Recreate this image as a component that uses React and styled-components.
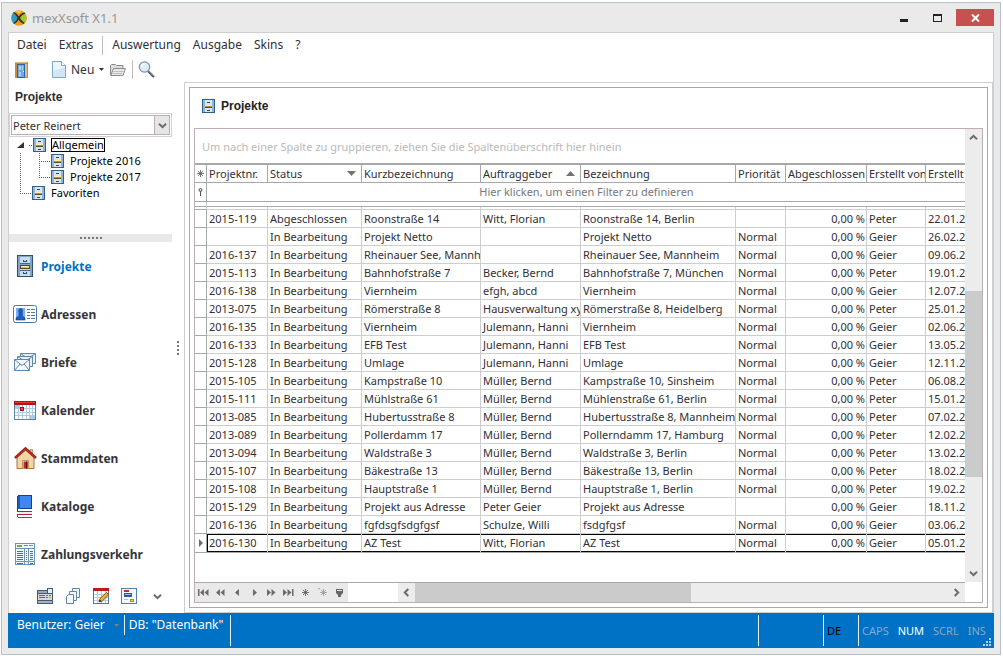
import React from "react";
import styled, { createGlobalStyle, css } from "styled-components";

const Global = createGlobalStyle`
  *, *::before, *::after { box-sizing: border-box; }
  html, body { margin: 0; background: #fff; }
  body, button, select, input {
    font-family: "Noto Sans", "Open Sans", sans-serif;
    font-size: 11px;
    color: #2f2f35;
  }
  button { background: none; border: 0; padding: 0; margin: 0; cursor: default; }
  ul { list-style: none; margin: 0; padding: 0; }
  svg { display: block; flex: none; }
`;

/* ---------- window frame ---------- */
const Page = styled.div`
  min-height: 100vh;
  padding: 2px 2px 1px 1px;
  display: flex;
`;
const Frame = styled.div`
  flex: 1;
  min-width: 0;
  display: flex;
  flex-direction: column;
  background: #eaeaea;
  border: 1px solid #b7bfc8;
  padding: 0 6px 6px;
`;
const TitleBar = styled.header`
  height: 29px;
  display: flex;
  align-items: center;
  gap: 5px;
  padding-left: 3px;
`;
const Title = styled.h1`
  flex: 1;
  margin: 0;
  font-size: 13px;
  font-weight: 400;
  color: #969696;
`;
const WindowButton = styled.button`
  width: 28px;
  height: 17px;
  display: flex;
  align-items: center;
  justify-content: center;
`;
const CloseButton = styled(WindowButton)`
  width: 38px;
  background: #c75050;
`;
const Content = styled.div`
  flex: 1;
  display: flex;
  flex-direction: column;
  min-width: 0;
  background: #fff;
  border: 1px solid #cfcfcf;
  border-bottom: 0;
`;

/* ---------- menu and toolbar ---------- */
const MenuBar = styled.nav`
  height: 24px;
  display: flex;
  align-items: center;
  padding-left: 8px;
  gap: 12px;
`;
const MenuButton = styled.button`
  font-size: 12px;
  line-height: 20px;
`;
const Rule = styled.span`
  width: 1px;
  height: 19px;
  background: #c3b8ba;
`;
const MenuRule = styled(Rule)`
  margin: 0 -3px;
`;
const ToolBar = styled.div`
  height: 25px;
  display: flex;
  align-items: center;
  padding-left: 6px;
`;
const ToolButton = styled.button`
  display: flex;
  align-items: center;
  gap: 5px;
  font-size: 12px;
  margin-right: ${(p) => p.$after || 6}px;
`;

/* ---------- left side ---------- */
const Body = styled.div`
  flex: 1;
  display: flex;
  min-height: 0;
`;
const Side = styled.aside`
  width: 163px;
  flex: none;
  display: flex;
  flex-direction: column;
`;
const SideTitle = styled.h2`
  margin: 0;
  height: 31px;
  padding-left: 6px;
  line-height: 30px;
  font: bold 12px/30px "Liberation Sans", sans-serif;
`;
const Combo = styled.label`
  display: grid;
  grid-template-columns: 1fr 16px;
  height: 24px;
  padding: 1px;
  border: 1px solid #d3d3d3;
`;
const ComboSelect = styled.select`
  appearance: none;
  grid-area: 1 / 1 / 2 / 3;
  border: 1px solid #bfaeb1;
  border-radius: 0;
  background: #fff;
  padding: 0 0 0 1px;
  margin: 0;
`;
const ComboArrow = styled.span`
  grid-area: 1 / 2 / 2 / 3;
  display: flex;
  align-items: center;
  justify-content: center;
  background: #e6e6e6;
  border: 1px solid #bfaeb1;
  pointer-events: none;
`;
const Tree = styled.ul`
  height: 97px;
  color: #000;
`;
const TreeBranch = styled.li`
  position: relative;
  ${(p) =>
    p.$line &&
    css`
      &::before {
        content: "";
        position: absolute;
        left: ${p.$x}px;
        top: ${p.$top}px;
        height: ${p.$line}px;
        border-left: 1px dotted #666;
      }
    `}
`;
const TreeRow = styled.div`
  height: 16px;
  display: flex;
  align-items: center;
  gap: 5px;
  padding-left: ${(p) => p.$indent}px;
`;
const Dots = styled.span`
  width: ${(p) => p.$w}px;
  border-top: 1px dotted #666;
  margin-right: -4px;
`;
const TreeLabel = styled.button`
  color: #000;
  height: 14px;
  line-height: 12px;
  border: 1px solid ${(p) => (p.$focus ? "#000" : "transparent")};
  white-space: nowrap;
`;
const HSplitter = styled.div`
  height: 8px;
  background: #e8e8e8;
  display: flex;
  align-items: center;
  justify-content: center;
  gap: 2px;
`;
const Dot = styled.i`
  width: 2px;
  height: 2px;
  background: #777;
`;
const VSplitter = styled.div`
  width: 12px;
  flex: none;
  display: flex;
  flex-direction: column;
  align-items: center;
  justify-content: center;
  gap: 2px;
`;
const NavList = styled.ul`
  flex: 1;
`;
const NavButton = styled.button`
  width: 100%;
  height: 48px;
  display: grid;
  grid-template-columns: 24px 1fr;
  justify-items: center;
  align-items: center;
  column-gap: 4px;
  padding-left: 4px;
  font-weight: bold;
  font-size: 12px;
  color: ${(p) => (p.$active ? "#0072c6" : "#35353a")};
  span { justify-self: start; }
`;
const IconRow = styled.div`
  height: 34px;
  padding-left: 28px;
  display: flex;
  align-items: center;
  gap: 12px;
`;
const IconButton = styled.button`
  width: 16px;
  height: 16px;
  display: flex;
  align-items: center;
  justify-content: center;
`;

/* ---------- main panel ---------- */
const Main = styled.main`
  flex: 1;
  min-width: 0;
  display: flex;
  border: 1px solid #cfcfcf;
  border-width: 1px 1px 1px 1px;
  padding: 4px;
`;
const Panel = styled.section`
  flex: 1;
  min-width: 0;
  display: flex;
  flex-direction: column;
  border: 1px solid #a8a8a8;
  padding: 0 4px 4px;
`;
const PanelTitle = styled.h2`
  margin: 0;
  height: 40px;
  padding: 0 0 4px 8px;
  display: flex;
  align-items: center;
  gap: 6px;
  font: bold 12px "Liberation Sans", sans-serif;
  color: #222;
`;
const Grid = styled.div`
  flex: 1;
  min-width: 0;
  display: grid;
  grid-template-columns: minmax(0, 1fr) 17px;
  grid-template-rows: 1fr 20px;
  border: 1px solid #bfaeb1;
`;
const GridView = styled.div`
  min-width: 0;
  overflow: hidden;
`;
const GroupBox = styled.div`
  height: 36px;
  padding-left: 7px;
  line-height: 36px;
  color: #b9b9b9;
  border-bottom: 2px solid #a8a8a8;
  white-space: nowrap;
`;
const Table = styled.table`
  table-layout: fixed;
  width: 100%;
  border-spacing: 0;
  td, th {
    height: 18px;
    padding: 0 1px 0 2px;
    line-height: 16px;
    text-align: left;
    font-weight: 400;
    white-space: nowrap;
    overflow: hidden;
    border-right: 1px solid #cdcdcd;
    border-bottom: 1px solid #cdcdcd;
  }
  td:last-child, th:last-child { border-right: 0; }
  th { border-color: #a8a8a8; }
`;
const Col = styled.col`
  width: ${(p) => (p.$w ? p.$w + "px" : "auto")};
`;
const HeadCell = styled.div`
  display: flex;
  align-items: center;
  justify-content: space-between;
  padding-right: ${(p) => (p.$sorted ? 4 : 0)}px;
`;
const Mark = styled.td`
  && {
    padding: 0;
    border-color: #a8a8a8;
    svg { margin: 0 auto; }
  }
`;
const FilterCell = styled.td`
  && {
    height: 19px;
    border-bottom-color: #a8a8a8;
    text-align: center;
  }
`;
const FilterButton = styled.button`
  color: #77777c;
`;
const GapCell = styled.td`
  && {
    height: ${(p) => p.$h}px;
    padding: 0;
    line-height: 0;
    ${(p) => p.$dark && "border-bottom-color: #a8a8a8;"}
    ${(p) => p.$plain && "border-right: 0;"}
  }
`;
const Row = styled.tr`
  ${(p) =>
    p.$current &&
    css`
      && td {
        height: 19px;
        border-bottom-color: #a8a8a8;
      }
      && td:not(:first-child) {
        box-shadow: inset 0 1px #000, inset 0 -1px #000;
      }
      && td:nth-child(2) {
        box-shadow: inset 0 1px #000, inset 0 -1px #000, inset 1px 0 #000;
      }
    `}
`;
const NumCell = styled.td`
  && { text-align: right; }
`;

/* ---------- scroll bars ---------- */
const VScroll = styled.div`
  display: flex;
  flex-direction: column;
  background: #ececec;
`;
const HScroll = styled.div`
  flex: 1;
  display: flex;
  background: #ececec;
`;
const ArrowButton = styled.button`
  width: 17px;
  height: 17px;
  display: flex;
  align-items: center;
  justify-content: center;
  align-self: center;
`;
const Span = styled.div`
  flex: ${(p) => p.$n} 1 0;
  ${(p) => p.$thumb && "background: #cbcbcb;"}
`;
const GridFoot = styled.div`
  display: flex;
  border-top: 1px solid #a8a8a8;
`;
const Navigator = styled.div`
  display: flex;
  align-items: center;
  background: #e9e9e9;
  margin-right: 50px;
`;
const NavigatorButton = styled.button`
  width: 17px;
  display: flex;
  justify-content: center;
`;
const Corner = styled.div`
  border-top: 0;
`;

/* ---------- status bar ---------- */
const StatusBar = styled.footer`
  height: 35px;
  display: flex;
  align-items: flex-start;
  background: #0072c6;
  color: #fff;
  margin: 0 -1px;
  padding: 2px 3px 2px 9px;
`;
const StatusCell = styled.div`
  height: ${(p) => (p.$short ? 20 : 31)}px;
  display: flex;
  align-items: center;
  font-size: 12px;
  border-right: 1px solid #e8f1f9;
  padding: ${(p) => p.$pad || "0 4px"};
`;
const StatusLabel = styled.span`
  line-height: 20px;
  align-self: flex-start;
  white-space: nowrap;
`;
const StatusSlot = styled.div`
  height: 31px;
  width: ${(p) => p.$w}px;
  border-left: 1px solid #e8f1f9;
  padding: 0 3px;
  display: flex;
  align-items: center;
  gap: 9px;
  color: #000;
`;
const Key = styled.span`
  color: ${(p) => (p.$on ? "#fff" : "#8fa9bf")};
`;
const Grow = styled.div`
  flex: 1;
`;
const Grip = styled.span`
  align-self: flex-end;
  margin-left: auto;
`;

/* ---------- icons ---------- */
const crisp = { shapeRendering: "crispEdges" };

const Logo = () => (
  <svg width="16" height="16" viewBox="0 0 16 16">
    <circle cx="8" cy="8" r="7.8" fill="#f39a1d" />
    <path d="M2.2 2.8C5 4.5 6 6 6.4 8 6 10 5 11.6 2.6 13.6A8 8 0 0 1 2.2 2.8Z" fill="#2f9bc9" />
    <path d="M13.8 2.8C11 4.5 9.6 6 9 8c.6 2 1.800 3.600 4.400 5.600A8 8 0 0 0 13.800 2.800Z" fill="#a9c62c" />
    <path d="M3 1.900C6 3.500 7 5 7.700 6.600 8.800 4.500 10.500 3 13.500 2.400L14.300 3.500C11.500 4.800 9.700 6.300 9 8.100c.9 1.900 2.300 3.300 4.700 4.700l-1 1.200C10 12.800 8.500 11.300 7.700 9.600 6.900 11.500 5.500 12.900 3.200 14l-1-1.100C4.700 11.500 5.900 9.900 6.400 8 5.800 6 4.400 4.300 2 3Z" fill="#33331f" />
    <path d="M5 1.600a7 7 0 0 1 5.500-.2L8 3.600Z" fill="#ffc45a" />
  </svg>
);
const Cabinet = () => (
  <svg width="13" height="14" viewBox="0 0 13 14" style={crisp}>
    <path fill="#33608a" d="M0 0h13v14H0z" />
    <path fill="#8fb5d8" d="M1 1h11v12H1z" />
    <path fill="#d5e6f5" d="M3 1h7v5H3zM3 9h7v4H3z" />
    <path fill="#fff3b0" d="M3 6h7v1H3z" />
    <path fill="#c98b10" d="M3 7h7v1H3z" />
    <path fill="#5c4a28" d="M3 8h7v1H3z" />
    <path fill="#24486e" d="M5 3h3v1H5zM5 11h3v1H5z" />
  </svg>
);
const CabinetLarge = () => (
  <svg width="16" height="22" viewBox="0 0 16 22" style={crisp}>
    <path fill="#2e506e" d="M0 0h16v22H0z" />
    <path fill="#7fa6c6" d="M1 1h14v20H1z" />
    <path fill="#c6dcf0" d="M3 2h10v7H3zM3 15h10v6H3z" />
    <path fill="#44678a" d="M3 8h10v1H3zM3 15h10v1H3z" />
    <path fill="#2e506e" d="M6 5h1v1h2V5h1v2H6zM6 17h1v1h2v-1h1v2H6z" />
    <path fill="#5b4a1c" d="M3 10h10v4H3z" />
    <path fill="#f5c926" d="M4 11h8v2H4z" />
    <path fill="#fff0a0" d="M4 11h8v1H4z" />
    <path fill="#c6dcf0" d="M3 14h10v1H3z" />
  </svg>
);
const Door = () => (
  <svg width="13" height="16" viewBox="0 0 13 16" style={crisp}>
    <path fill="#c58a45" d="M0 0h13v16H0z" />
    <path fill="#e6b878" d="M0 0h12v1H0zM10 2h2v13h-2z" />
    <path fill="#2a65a8" d="M2 2h8v14H2z" />
    <path fill="#6ea8e6" d="M3 3h6v12H3z" />
    <path fill="#a9d0f6" d="M4 4h2v4H4zM7 4h1v4H7zM4 10h2v4H4z" />
    <path fill="#fff" d="M8 9h1v1H8z" />
  </svg>
);
const Doc = () => (
  <svg width="14" height="17" viewBox="0 0 14 17">
    <path d="M.5.5h9l4 4v12H.5z" fill="#edf5fc" stroke="#7fa5c8" />
    <path d="M1 10l12-4v10H1z" fill="#d4e6f6" />
    <path d="M9.500.500v4h4" fill="#fff" stroke="#7fa5c8" />
  </svg>
);
const Folder = () => (
  <svg width="16" height="13" viewBox="0 0 16 13">
    <path d="M.5 12V2.500l1-1h4l1 1h6.500v3" fill="#dedede" stroke="#8b8b8b" />
    <path d="M.7 12.500 3.500 5.500h12l-2.500 7Z" fill="#e9e9e9" stroke="#8b8b8b" />
    <path d="M3.500 8.500h10M2.500 10.500h10" stroke="#bdbdbd" />
  </svg>
);
const Magnifier = () => (
  <svg width="17" height="17" viewBox="0 0 17 17">
    <path d="m10 10 6 6" stroke="#4b5561" strokeWidth="2.400" />
    <path d="m10.500 9.800 5.500 5.500" stroke="#aab6c4" strokeWidth=".8" />
    <circle cx="6.500" cy="6" r="5.200" fill="#dcecf9" stroke="#7b93ab" strokeWidth="1.200" />
    <path d="M3.500 6a3 3 0 0 1 3-3" stroke="#fff" fill="none" strokeWidth="1.300" />
  </svg>
);
const Card = () => (
  <svg width="24" height="18" viewBox="0 0 24 18">
    <rect x=".5" y=".5" width="23" height="17" rx="2" fill="#fff" stroke="#4a78ad" />
    <path fill="#74b0f2" d="M3 3h9v12H3z" />
    <path d="M3 15v-2l3-2V8c-.8-3 .200-4.500 1.700-4.500S10 5 9.300 8v3l2.700 2v2Z" fill="#1c5fc4" stroke="#163d80" strokeWidth=".6" />
    <path d="M14 4.500h3m1 0h4M14 7.500h3m1 0h4M14 10.500h3m1 0h4M14 13.500h3m1 0h4" stroke="#56789c" style={crisp} />
  </svg>
);
const Letters = () => (
  <svg width="22" height="18" viewBox="0 0 22 18">
    <g fill="#e7f1fa" stroke="#6189b0">
      <path d="M6.500.500h15v10h-15z" />
      <path d="m6.500.500 7.500 5 7.500-5" fill="none" />
      <path d="M3.500 3.500h15v10h-15z" />
      <path d="m3.500 3.500 7.500 5 7.500-5" fill="none" />
      <path d="M.5 6.500h15v11H.5z" fill="#f2f8fd" />
      <path d="m.5 6.500 7.500 6 7.500-6M.5 17.500l5.500-6.500M15.500 17.500 10 11" fill="none" />
    </g>
  </svg>
);
const CalendarIcon = () => (
  <svg width="22" height="19" viewBox="0 0 22 19" style={crisp}>
    <path fill="#5d83ac" d="M0 0h22v19H0z" />
    <path fill="#fff" d="M1 4h20v14H1z" />
    <path fill="#b5121b" d="M0 0h22v4H0z" />
    <path fill="#e03a36" d="M1 1h20v1H1z" />
    <path fill="#a9cbea" d="M1 4h5v3H1zM16 15h5v3h-5z" />
    <path d="M1 7.500h20M1 11.500h20M1 14.500h20M4.500 4v14M8.500 4v14M12.500 4v14M15.500 4v14M18.500 4v14" stroke="#aacbe8" />
    <path fill="#9c1414" d="M6 6h4v4H6z" />
    <path fill="#e45045" d="M7 7h2v2H7z" />
  </svg>
);
const House = () => (
  <svg width="23" height="22" viewBox="0 0 23 22">
    <path d="M3 21.500V10.500L11.500 3 20 10.500v11Z" fill="#f1d5a6" stroke="#a5713c" />
    <path d="M16 2.500h2.500v5L16 5Z" fill="#e4c08d" stroke="#a5713c" strokeWidth=".6" />
    <path d="M1 11 11.500 1.500 22 11" fill="none" stroke="#9a1f16" strokeWidth="2.600" />
    <path d="M2 10.300 11.500 1.600 21 10.300" fill="none" stroke="#cf4034" strokeWidth=".8" />
    <path d="M8.500 21.500v-8h6v8" fill="#fff" stroke="#b98f5d" />
    <path fill="#c1272d" d="M9.500 14.500h4v7h-4z" />
    <path fill="#5c0f10" d="M12 14.500h1.500v7H12z" />
  </svg>
);
const Book = () => (
  <svg width="16" height="23" viewBox="0 0 16 23" style={crisp}>
    <path fill="#143f94" d="M0 1h1V0h14v17H0z" />
    <path fill="#3f87ee" d="M3 1h11v12H3z" />
    <path fill="#1e5bc0" d="M1 1h2v13H1z" />
    <path fill="#fff" d="M1 14h14v2H1z" />
    <path fill="#1c56b8" d="M0 16h15v1H0z" />
    <path fill="#e9eef5" d="M1 17h14v2H1z" />
    <path fill="#b3222a" d="M0 19h15v1H0z" />
    <path fill="#fff" d="M1 20h14v2H1z" />
    <path fill="#1f7a32" d="M0 20h1v2H0zM1 22h14v1H1z" />
  </svg>
);
const Ledger = () => (
  <svg width="20" height="22" viewBox="0 0 20 22" style={crisp}>
    <path fill="#6a93b8" d="M0 0h20v22H0z" />
    <path fill="#eff6fc" d="M1 1h18v20H1z" />
    <path fill="#6cb52d" d="M2 2h5v2H2z" />
    <path d="M9 2.500h4M14 2.500h4M0 5.500h20M9.500 5v16M13.500 5v16M0 18.500h20" stroke="#6a93b8" />
    <path d="M2 8.500h6M2 10.500h6M2 12.500h6M2 14.500h6M2 16.500h6M11 8.500h1M11 10.500h1M11 12.500h1M11 14.500h1M11 16.500h1M15 8.500h3M15 10.500h3M15 12.500h3M15 14.500h3M15 16.500h3M2 20.500h6M15 20.500h3" stroke="#4a7193" />
  </svg>
);
const Register = () => (
  <svg width="16" height="16" viewBox="0 0 16 16" style={crisp}>
    <path fill="#455b73" d="M0 2h10V0h6v16H0z" />
    <path fill="#e3edf7" d="M11 1h4v4h-4z" />
    <path fill="#8fa9c4" d="M1 3h9v2H1z" />
    <path fill="#d9d9d9" d="M1 6h14v6H1z" />
    <path fill="#486a90" d="M2 7h6v1H2zM2 9h6v1H2z" />
    <path fill="#3a78c8" d="M9 7h2v1H9zM9 9h2v1H9z" />
    <path fill="#d4472d" d="M12 7h2v1h-2z" />
    <path fill="#e8a11f" d="M12 9h2v1h-2z" />
    <path fill="#a5b4c4" d="M1 13h14v2H1z" />
  </svg>
);
const Pages = () => (
  <svg width="14" height="16" viewBox="0 0 14 16">
    <g fill="#f3f8fc" stroke="#5e87af">
      <path d="M6.500.500h7v9h-7z" />
      <path d="M3.500 3.500h7v9h-7z" />
      <path d="M.5 8.500l2-2h5v9h-7z" />
    </g>
  </svg>
);
const EditCalendar = () => (
  <svg width="16" height="16" viewBox="0 0 16 16">
    <g style={crisp}>
      <path fill="#54799f" d="M0 0h16v16H0z" />
      <path fill="#fff" d="M1 3h14v12H1z" />
      <path fill="#c3161c" d="M0 0h16v3H0z" />
      <path d="M1 6.500h14M1 9.500h14M1 12.500h14M4.500 3v12M8.500 3v12M12.500 3v12" stroke="#b3cfe8" />
    </g>
    <path d="m6 14 1-3.500 6.500-6 2.300 2.300-6.600 6.200Z" fill="#e9b03a" stroke="#7a4a14" strokeWidth=".9" />
    <path d="m6 14 .8-2.500 1.700 1.700Z" fill="#2b2b2b" />
  </svg>
);
const FormIcon = () => (
  <svg width="16" height="16" viewBox="0 0 16 16" style={crisp}>
    <path fill="#4f7fb3" d="M0 0h16v16H0z" />
    <path fill="#f5f9fd" d="M1 1h14v14H1z" />
    <path fill="#cc2a2a" d="M3 2h5v2H3z" />
    <path fill="#2b5c95" d="M3 5h8v4H3z" />
    <path fill="#9cbcdc" d="M4 6h6v1H4z" />
    <path fill="#b98517" d="M9 11h4v3H9z" />
    <path fill="#f6d048" d="M10 12h2v1h-2z" />
    <path fill="#a9c3dc" d="M3 11h4v1H3z" />
  </svg>
);
const turns = { up: 0, right: 90, down: 180, left: 270 };
const Chevron = ({ dir }) => (
  <svg width="9" height="9" viewBox="0 0 9 9">
    <path d="M1 6.300 4.500 2.800 8 6.300" transform={`rotate(${turns[dir]} 4.500 4.500)`} fill="none" stroke="#6b6b6b" strokeWidth="2" />
  </svg>
);
const SortMark = ({ up }) => (
  <svg width="9" height="5" viewBox="0 0 9 5">
    <path d={up ? "M0 5 4.500 0 9 5Z" : "M0 0h9L4.500 5Z"} fill="#737373" />
  </svg>
);
const star = "M3.500 0v7M0 3.500h7M1 1l5 5M6 1 1 6";
const StarIcon = () => (
  <svg width="7" height="7" viewBox="0 0 7 7"><path d={star} stroke="#666" strokeWidth=".9" /></svg>
);
const Pin = () => (
  <svg width="5" height="8" viewBox="0 0 5 8">
    <circle cx="2.500" cy="2" r="1.500" fill="#ddd" stroke="#555" />
    <path d="M2.500 3v5" stroke="#555" />
  </svg>
);
const Pointer = () => (
  <svg width="4" height="8" viewBox="0 0 4 8"><path d="M0 0l4 4-4 4z" fill="#6b6b6b" /></svg>
);
const navShapes = {
  Erster: "M0 1h1.500v7H0zM6 1v7L2 4.500zM10.500 1v7L6.500 4.500z",
  "Seite zurück": "M5 1v7L1 4.500zM9.500 1v7L5.500 4.500z",
  Zurück: "M7 1v7L3 4.500z",
  Weiter: "M4 1v7l4-3.500z",
  "Seite vor": "M1 1v7l4-3.500zM5.500 1v7l4-3.500z",
  Letzter: "M0 1v7l4-3.500zM4.500 1v7l4-3.500zM9 1h1.500v7H9z",
};

/* ---------- data ---------- */
const columns = [
  { label: "Projektnr.", w: 61 },
  { label: "Status", w: 94, sort: "down" },
  { label: "Kurzbezeichnung", w: 119 },
  { label: "Auftraggeber", w: 100, sort: "up" },
  { label: "Bezeichnung", w: 155 },
  { label: "Priorität", w: 50 },
  { label: "Abgeschlossen", w: 81 },
  { label: "Erstellt von", w: 59 },
  { label: "Erstellt am" },
];
const B = "In Bearbeitung";
const N = "Normal";
const rows = [
  ["2015-119", "Abgeschlossen", "Roonstraße 14", "Witt, Florian", "Roonstraße 14, Berlin", "", "Peter", "22.01.2015"],
  ["", B, "Projekt Netto", "", "Projekt Netto", N, "Geier", "26.02.2016"],
  ["2016-137", B, "Rheinauer See, Mannh", "", "Rheinauer See, Mannheim", N, "Geier", "09.06.2016"],
  ["2015-113", B, "Bahnhofstraße 7", "Becker, Bernd", "Bahnhofstraße 7, München", N, "Peter", "19.01.2015"],
  ["2016-138", B, "Viernheim", "efgh, abcd", "Viernheim", N, "Geier", "12.07.2016"],
  ["2013-075", B, "Römerstraße 8", "Hausverwaltung xy", "Römerstraße 8, Heidelberg", N, "Peter", "25.01.2013"],
  ["2016-135", B, "Viernheim", "Julemann, Hanni", "Viernheim", N, "Geier", "02.06.2016"],
  ["2016-133", B, "EFB Test", "Julemann, Hanni", "EFB Test", N, "Geier", "13.05.2016"],
  ["2015-128", B, "Umlage", "Julemann, Hanni", "Umlage", N, "Geier", "12.11.2015"],
  ["2015-105", B, "Kampstraße 10", "Müller, Bernd", "Kampstraße 10, Sinsheim", N, "Peter", "06.08.2015"],
  ["2015-111", B, "Mühlstraße 61", "Müller, Bernd", "Mühlenstraße 61, Berlin", N, "Peter", "15.01.2015"],
  ["2013-085", B, "Hubertusstraße 8", "Müller, Bernd", "Hubertusstraße 8, Mannheim", N, "Peter", "07.02.2013"],
  ["2013-089", B, "Pollerdamm 17", "Müller, Bernd", "Pollerndamm 17, Hamburg", N, "Peter", "12.02.2013"],
  ["2013-094", B, "Waldstraße 3", "Müller, Bernd", "Waldstraße 3, Berlin", N, "Peter", "13.02.2013"],
  ["2015-107", B, "Bäkestraße 13", "Müller, Bernd", "Bäkestraße 13, Berlin", N, "Peter", "18.02.2015"],
  ["2015-108", B, "Hauptstraße 1", "Müller, Bernd", "Hauptstraße 1, Berlin", N, "Peter", "19.02.2015"],
  ["2015-129", B, "Projekt aus Adresse", "Peter Geier", "Projekt aus Adresse", "", "Geier", "18.11.2015"],
  ["2016-136", B, "fgfdsgfsdgfgsf", "Schulze, Willi", "fsdgfgsf", N, "Geier", "03.06.2016"],
  ["2016-130", B, "AZ Test", "Witt, Florian", "AZ Test", N, "Geier", "05.01.2016"],
];
const nav = [
  ["Projekte", CabinetLarge],
  ["Adressen", Card],
  ["Briefe", Letters],
  ["Kalender", CalendarIcon],
  ["Stammdaten", House],
  ["Kataloge", Book],
  ["Zahlungsverkehr", Ledger],
];
const shortcuts = [
  ["Kasse", Register],
  ["Kopien", Pages],
  ["Termine", EditCalendar],
  ["Formulare", FormIcon],
];

function ProjectTree() {
  return (
    <Tree>
      <TreeBranch $line={41} $x={11} $top={16}>
        <TreeRow $indent={8}>
          <svg width="7" height="6" viewBox="0 0 7 6"><path d="M7 0v6H0Z" fill="#333" /></svg>
          <Dots $w={3} />
          <Cabinet />
          <TreeLabel $focus>Allgemein</TreeLabel>
        </TreeRow>
        <ul>
          <TreeBranch $line={25} $x={30} $top={0}>
            <TreeRow $indent={32}><Dots $w={9} /><Cabinet /><TreeLabel>Projekte 2016</TreeLabel></TreeRow>
          </TreeBranch>
          <li>
            <TreeRow $indent={32}><Dots $w={9} /><Cabinet /><TreeLabel>Projekte 2017</TreeLabel></TreeRow>
          </li>
        </ul>
      </TreeBranch>
      <li>
        <TreeRow $indent={13}><Dots $w={9} /><Cabinet /><TreeLabel>Favoriten</TreeLabel></TreeRow>
      </li>
    </Tree>
  );
}

function ProjectTable() {
  return (
    <Table>
      <colgroup>
        <Col $w={12} />
        {columns.map((c) => <Col key={c.label} $w={c.w} />)}
      </colgroup>
      <thead>
        <tr>
          <Mark as="th"><StarIcon /></Mark>
          {columns.map((c) => (
            <th key={c.label}>
              <HeadCell $sorted={!!c.sort}>
                {c.label}
                {c.sort && <SortMark up={c.sort === "up"} />}
              </HeadCell>
            </th>
          ))}
        </tr>
      </thead>
      <tbody>
        <tr>
          <Mark><Pin /></Mark>
          <FilterCell colSpan={9}>
            <FilterButton>Hier klicken, um einen Filter zu definieren</FilterButton>
          </FilterCell>
        </tr>
        <tr>
          <GapCell $h={5} $dark />
          <GapCell $h={5} $dark $plain colSpan={9} />
        </tr>
        <tr>
          <GapCell $h={3} $dark />
          {columns.map((c) => <GapCell key={c.label} $h={3} />)}
        </tr>
        {rows.map((r, i) => {
          const current = i === rows.length - 1;
          return (
            <Row key={i} $current={current}>
              <Mark>{current && <Pointer />}</Mark>
              {r.slice(0, 6).map((v, k) => <td key={k}>{v}</td>)}
              <NumCell>0,00 %</NumCell>
              <td>{r[6]}</td>
              <td>{r[7]}</td>
            </Row>
          );
        })}
      </tbody>
    </Table>
  );
}

export default function App() {
  return (
    <>
      <Global />
      <Page>
        <Frame>
          <TitleBar>
            <Logo />
            <Title>mexXsoft X1.1</Title>
            <WindowButton aria-label="Minimieren">
              <svg width="8" height="8" viewBox="0 0 8 8"><path d="M0 5h8v3H0z" fill="#222" /></svg>
            </WindowButton>
            <WindowButton aria-label="Maximieren">
              <svg width="9" height="8" viewBox="0 0 9 8"><path d="M0 0h9v8H0zM1 2v5h7V2z" fill="#222" fillRule="evenodd" /></svg>
            </WindowButton>
            <CloseButton aria-label="Schließen">
              <svg width="9" height="8" viewBox="0 0 9 8"><path d="m1 .500 7 7m0-7-7 7" stroke="#fff" strokeWidth="2" /></svg>
            </CloseButton>
          </TitleBar>
          <Content>
            <MenuBar>
              <MenuButton>Datei</MenuButton>
              <MenuButton>Extras</MenuButton>
              <MenuRule />
              <MenuButton>Auswertung</MenuButton>
              <MenuButton>Ausgabe</MenuButton>
              <MenuButton>Skins</MenuButton>
              <MenuButton>?</MenuButton>
            </MenuBar>
            <ToolBar>
              <ToolButton $after={24} aria-label="Beenden"><Door /></ToolButton>
              <ToolButton>
                <Doc />
                Neu
                <svg width="5" height="3" viewBox="0 0 5 3"><path d="M0 0h5L2.500 3Z" fill="#333" /></svg>
              </ToolButton>
              <ToolButton aria-label="Öffnen"><Folder /></ToolButton>
              <Rule />
              <ToolButton as="button" aria-label="Suchen" style={{}}>
                <span />
                <Magnifier />
              </ToolButton>
            </ToolBar>
            <Body>
              <Side>
                <SideTitle>Projekte</SideTitle>
                <Combo>
                  <ComboSelect aria-label="Bearbeiter" defaultValue="Peter Reinert">
                    <option>Peter Reinert</option>
                  </ComboSelect>
                  <ComboArrow><Chevron dir="down" /></ComboArrow>
                </Combo>
                <ProjectTree />
                <HSplitter>{[0, 1, 2, 3, 4, 5].map((i) => <Dot key={i} />)}</HSplitter>
                <NavList>
                  {nav.map(([label, Icon], i) => (
                    <li key={label}>
                      <NavButton $active={i === 0}><Icon /><span>{label}</span></NavButton>
                    </li>
                  ))}
                </NavList>
                <IconRow>
                  {shortcuts.map(([label, Icon]) => (
                    <IconButton key={label} aria-label={label}><Icon /></IconButton>
                  ))}
                  <IconButton aria-label="Mehr"><Chevron dir="down" /></IconButton>
                </IconRow>
              </Side>
              <VSplitter>{[0, 1, 2, 3].map((i) => <Dot key={i} />)}</VSplitter>
              <Main>
                <Panel>
                  <PanelTitle><Cabinet />Projekte</PanelTitle>
                  <Grid>
                    <GridView>
                      <GroupBox>Um nach einer Spalte zu gruppieren, ziehen Sie die Spaltenüberschrift hier hinein</GroupBox>
                      <ProjectTable />
                    </GridView>
                    <VScroll>
                      <ArrowButton aria-label="Nach oben"><Chevron dir="up" /></ArrowButton>
                      <Span $n={145} />
                      <Span $n={187} $thumb />
                      <Span $n={88} />
                      <ArrowButton aria-label="Nach unten"><Chevron dir="down" /></ArrowButton>
                    </VScroll>
                    <GridFoot>
                      <Navigator>
                        {Object.entries(navShapes).map(([label, d]) => (
                          <NavigatorButton key={label} aria-label={label}>
                            <svg width="11" height="9" viewBox="0 0 11 9"><path d={d} fill="#6b6b6b" /></svg>
                          </NavigatorButton>
                        ))}
                        <NavigatorButton aria-label="Neu"><StarIcon /></NavigatorButton>
                        <NavigatorButton aria-label="Anhängen">
                          <svg width="9" height="9" viewBox="0 0 9 9">
                            <path d={star} transform="translate(2 1)" stroke="#a0a0a0" strokeWidth=".9" />
                            <path d="M0 0h2L1 2Z" fill="#a0a0a0" />
                          </svg>
                        </NavigatorButton>
                        <NavigatorButton aria-label="Filtern">
                          <svg width="7" height="8" viewBox="0 0 7 8"><path d="M0 0h7v4L5 6v2H2V6L0 4ZM1 1v1h5V1Z" fill="#666" fillRule="evenodd" /></svg>
                        </NavigatorButton>
                      </Navigator>
                      <HScroll>
                        <ArrowButton aria-label="Nach links"><Chevron dir="left" /></ArrowButton>
                        <Span $n={276} $thumb />
                        <Span $n={257} />
                        <ArrowButton aria-label="Nach rechts"><Chevron dir="right" /></ArrowButton>
                      </HScroll>
                    </GridFoot>
                    <Corner />
                  </Grid>
                </Panel>
              </Main>
            </Body>
            <StatusBar>
              <StatusCell $short $pad="0 4px 0 0">
                <StatusLabel>Benutzer: Geier</StatusLabel>
                <svg width="15" height="3" viewBox="0 0 15 3"><path d="M9 0h5l-2.500 3Z" fill="#7a8288" /></svg>
              </StatusCell>
              <StatusCell $pad="0 7px 0 4px"><StatusLabel>DB: "Datenbank"</StatusLabel></StatusCell>
              <Grow />
              <StatusSlot $w={65} />
              <StatusSlot $w={35}>DE</StatusSlot>
              <StatusSlot $w={125}>
                <Key>CAPS</Key>
                <Key $on>NUM</Key>
                <Key>SCRL</Key>
                <Key>INS</Key>
              </StatusSlot>
              <Grip>
                <svg width="8" height="8" viewBox="0 0 8 8" style={crisp}>
                  <path d="M6 0h2v2H6zM3 3h2v2H3zM6 3h2v2H6zM0 6h2v2H0zM3 6h2v2H3zM6 6h2v2H6z" fill="#b9d2e6" />
                </svg>
              </Grip>
            </StatusBar>
          </Content>
        </Frame>
      </Page>
    </>
  );
}
